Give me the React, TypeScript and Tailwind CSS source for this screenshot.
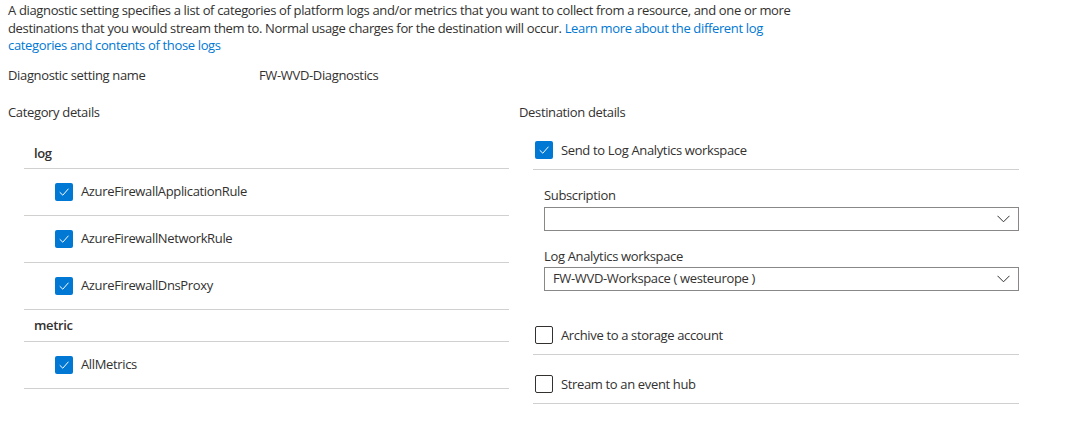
import React from "react";

const font = { fontFamily: '"Open Sans", "Noto Sans", sans-serif', letterSpacing: "-0.35px" };

function CheckBox({ checked }: { checked: boolean }) {
  if (!checked) {
    return <div className="h-[18px] w-[18px] shrink-0 rounded-[2px] border border-[#323130] bg-white" />;
  }
  return (
    <div className="flex h-[18px] w-[18px] shrink-0 items-center justify-center rounded-[2px] bg-[#0078d4]">
      <svg width="12" height="12" viewBox="0 0 12 12" fill="none">
        <path d="M2 6.5 L4.8 9.2 L10.2 3" stroke="white" strokeWidth="1" strokeLinecap="round" strokeLinejoin="round" />
      </svg>
    </div>
  );
}

function Chevron() {
  return (
    <svg width="13" height="8" viewBox="0 0 13 8" fill="none">
      <path d="M0.5 0.8 L6.5 6.8 L12.5 0.8" stroke="#323130" strokeWidth="1" />
    </svg>
  );
}

function CategoryRow({ label }: { label: string }) {
  return (
    <div className="flex h-[47px] items-center gap-[8px] border-b border-[#d2d0ce] pl-[31px]">
      <CheckBox checked />
      <span className="text-[13px] text-[#323130]">{label}</span>
    </div>
  );
}

function DestRow({ label, checked }: { label: string; checked: boolean }) {
  return (
    <div className="flex items-center gap-[8px] border-b border-[#d2d0ce] pb-[10px] pl-[2px] pt-[20px]">
      <CheckBox checked={checked} />
      <span className="text-[13px] leading-[18px] text-[#323130]">{label}</span>
    </div>
  );
}

function Dropdown({ value }: { value: string }) {
  return (
    <div className="flex h-[24px] items-center justify-between border border-[#8a8886] pl-[8px] pr-[8px]">
      <span className="text-[13px] text-[#323130]">{value}</span>
      <Chevron />
    </div>
  );
}

export default function App() {
  return (
    <div className="h-[426px] w-[1089px] bg-white pl-[8px] pt-[2px] text-[#323130]" style={font}>
      <p className="w-[900px] text-[13px] leading-[17.5px]">
        A diagnostic setting specifies a list of categories of platform logs and/or metrics that you want to collect from a
        resource, and one or more
        <br />
        destinations that you would stream them to. Normal usage charges for the destination will occur.{" "}
        <span className="text-[#0078d4]">
          Learn more about the different log
          <br />
          categories and contents of those logs
        </span>
      </p>

      <div className="mt-[11px] flex text-[13px] leading-[18px]">
        <span className="w-[251px]">Diagnostic setting name</span>
        <span>FW-WVD-Diagnostics</span>
      </div>

      <div className="mt-[19px] grid grid-cols-[501px_500px] gap-[10px]">
        {/* Category details */}
        <div>
          <div className="text-[13px] leading-[18px]">Category details</div>
          <div className="ml-[16px] mt-[17px]">
            <div className="flex h-[31px] items-center border-b border-[#d2d0ce] pl-[10px] pt-[2px] text-[13px] font-semibold">log</div>
            <CategoryRow label="AzureFirewallApplicationRule" />
            <CategoryRow label="AzureFirewallNetworkRule" />
            <CategoryRow label="AzureFirewallDnsProxy" />
            <div className="flex h-[32px] items-center border-b border-[#d2d0ce] pl-[10px] pt-[2px] text-[13px] font-semibold">metric</div>
            <CategoryRow label="AllMetrics" />
          </div>
        </div>

        {/* Destination details */}
        <div>
          <div className="text-[13px] leading-[18px]">Destination details</div>
          <div className="ml-[14px]">
            <DestRow label="Send to Log Analytics workspace" checked />
            <div className="pl-[11px]">
              <div className="mt-[16px] text-[13px] leading-[18px]">Subscription</div>
              <div className="mt-[3px]">
                <Dropdown value="" />
              </div>
              <div className="mt-[16px] text-[13px] leading-[18px]">Log Analytics workspace</div>
              <div className="mt-[2px]">
                <Dropdown value="FW-WVD-Workspace ( westeurope )" />
              </div>
            </div>
            <div className="mt-[15px]">
              <DestRow label="Archive to a storage account" checked={false} />
            </div>
            <DestRow label="Stream to an event hub" checked={false} />
          </div>
        </div>
      </div>
    </div>
  );
}
